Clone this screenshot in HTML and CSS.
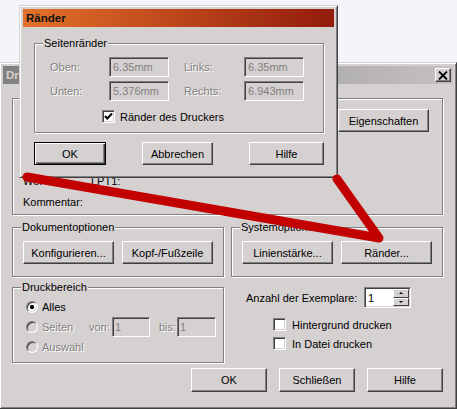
FILE: index.html
```html
<!DOCTYPE html>
<html lang="de">
<head>
  <meta charset="UTF-8" />
  <meta name="viewport" content="width=device-width, initial-scale=1.0" />
  <title>Drucken - Ränder</title>
  <link rel="stylesheet" href="styles.css">
</head>
<body>
  <div class="desk">

    <!-- main print dialog (inactive) -->
    <div class="win print">
      <div class="titlebar inactive">
        <span>Drucken</span>
        <span class="close">
          <svg width="10" height="9" viewBox="0 0 10 9"><path d="M1 0.5 L9 8.5 M9 0.5 L1 8.5" stroke="#000" stroke-width="1.8" fill="none"/></svg>
        </span>
      </div>
      <div class="print-body">
        <div class="group printer">
          <!-- name / status / type rows sit behind the Ränder dialog -->
          <div class="printer-grid">
            <span></span>
            <div class="field select"></div>
            <button class="btn">Eigenschaften</button>
            <span></span><span></span><span></span>
            <span></span><span></span><span></span>
            <span>Wo:</span>
            <span>LPT1:</span>
            <span></span>
            <span>Kommentar:</span>
            <span></span>
            <span></span>
          </div>
        </div>

        <div class="pair opts">
          <div class="group btn-group">
            <span class="legend">Dokumentoptionen</span>
            <button class="btn">Konfigurieren...</button>
            <button class="btn">Kopf-/Fußzeile</button>
          </div>
          <div class="group btn-group">
            <span class="legend">Systemoptionen</span>
            <button class="btn">Linienstärke...</button>
            <button class="btn">Ränder...</button>
          </div>
        </div>

        <div class="pair lower">
          <div class="group range">
            <span class="legend">Druckbereich</span>
            <div class="range-row">
              <span class="radio on"></span>
              <span class="rlabel">Alles</span>
            </div>
            <div class="range-row">
              <span class="rcell">
                <span class="radio off"></span>
                <span class="rlabel muted">Seiten</span>
              </span>
              <span class="muted from">von:</span>
              <span class="field off small">1</span>
              <span class="muted to">bis:</span>
              <span class="field off small wide">1</span>
            </div>
            <div class="range-row">
              <span class="radio off"></span>
              <span class="rlabel muted">Auswahl</span>
            </div>
          </div>

          <div class="copies">
            <div class="copies-row">
              <span class="copies-label">Anzahl der Exemplare:</span>
              <div class="field spin">
                <span class="spin-val">1</span>
                <span class="spin-btns">
                  <span class="spin-btn"><i class="tri up"></i></span>
                  <span class="spin-btn"><i class="tri down"></i></span>
                </span>
              </div>
            </div>
            <div class="check-row">
              <span class="check"></span>
              <span>Hintergrund drucken</span>
            </div>
            <div class="check-row">
              <span class="check"></span>
              <span>In Datei drucken</span>
            </div>
          </div>
        </div>

        <div class="actions">
          <button class="btn">OK</button>
          <button class="btn">Schließen</button>
          <button class="btn">Hilfe</button>
        </div>
      </div>
    </div>

    <!-- margins dialog (active, on top) -->
    <div class="win margins">
      <div class="titlebar active">
        <span>Ränder</span>
      </div>
      <div class="margins-body">
        <div class="group sides">
          <span class="legend">Seitenränder</span>
          <div class="sides-grid">
            <span class="muted">Oben:</span>
            <span class="field off">6.35mm</span>
            <span class="muted gap-left">Links:</span>
            <span class="field off">6.35mm</span>
            <span class="muted">Unten:</span>
            <span class="field off">5.376mm</span>
            <span class="muted gap-left">Rechts:</span>
            <span class="field off">6.943mm</span>
          </div>
          <div class="printer-margins">
            <span class="check">
              <svg width="9" height="9" viewBox="0 0 9 9"><path d="M1 4 L3.3 6.5 L8 1.5" stroke="#000" stroke-width="2" fill="none"/></svg>
            </span>
            <span>Ränder des Druckers</span>
          </div>
        </div>
        <div class="margins-actions">
          <button class="btn default w72">OK</button>
          <button class="btn w71">Abbrechen</button>
          <button class="btn w75">Hilfe</button>
        </div>
      </div>
    </div>

    <!-- red pointer drawn over both dialogs -->
    <svg class="pointer" width="457" height="409" viewBox="0 0 457 409">
      <defs>
        <filter id="soft"><feGaussianBlur stdDeviation="0.6"/></filter>
      </defs>
      <path d="M27 177 L379 238 L337 179" stroke="#c20000" stroke-width="9" stroke-linecap="round" stroke-linejoin="round" fill="none" filter="url(#soft)"/>
    </svg>
  </div>
</body>
</html>
```

FILE: styles.css
```css
* {
  box-sizing: border-box;
}

body {
  margin: 0;
  font-family: "Liberation Sans", Arial, sans-serif;
  font-size: 11px;
  color: #000;
  background: #f3f5fa;
}

.desk {
  position: relative;
  width: 457px;
  height: 409px;
  overflow: hidden;
}

/* window frame */
.win {
  position: absolute;
  display: flex;
  flex-direction: column;
  padding: 3px;
  background: #d6d1d1;
  border: 1px solid;
  border-color: #d6d1d1 #404040 #404040 #d6d1d1;
  box-shadow: inset 1px 1px 0 #fff, inset -1px -1px 0 #808080;
}

.win.print {
  left: -1px;
  top: 62px;
  width: 458px;
  height: 347px;
}

.win.margins {
  left: 19px;
  top: 5px;
  width: 319px;
  height: 173px;
}

.titlebar {
  height: 18px;
  flex-shrink: 0;
  display: flex;
  align-items: center;
  justify-content: space-between;
  padding: 0 2px 0 3px;
  font-weight: bold;
  font-size: 11.5px;
}

.titlebar.inactive {
  background: linear-gradient(90deg, #808080, #c4c0c4);
  color: #d4d0c8;
}

.titlebar.active {
  background: linear-gradient(90deg, #e2722a, #931b0c);
  color: #111;
}

.close {
  width: 16px;
  height: 14px;
  display: flex;
  align-items: center;
  justify-content: center;
  background: #d6d1d1;
  border: 1px solid;
  border-color: #fff #404040 #404040 #fff;
  box-shadow: inset -1px -1px 0 #808080;
}

/* controls */
.btn {
  font: inherit;
  color: #000;
  padding: 0;
  height: 23px;
  background: #d6d1d1;
  border: 1px solid;
  border-color: #fff #404040 #404040 #fff;
  box-shadow: inset -1px -1px 0 #808080;
}

.btn.default {
  border-color: #000;
  box-shadow: inset 1px 1px 0 #fff, inset -1px -1px 0 #404040, inset -2px -2px 0 #808080;
}

.field {
  display: flex;
  align-items: center;
  height: 20px;
  padding: 0 3px;
  background: #fff;
  border: 1px solid;
  border-color: #808080 #fff #fff #808080;
  box-shadow: inset 1px 1px 0 #404040, inset -1px -1px 0 #d6d1d1;
  white-space: nowrap;
  overflow: hidden;
}

.field.off {
  background: #d6d1d1;
  color: #808080;
}

.muted {
  color: #808080;
  text-shadow: 1px 1px 0 #fff;
}

.group {
  position: relative;
  border: 1px solid #808080;
  box-shadow: inset 1px 1px 0 #fff, 1px 1px 0 #fff;
}

.legend {
  position: absolute;
  top: -7px;
  left: 8px;
  padding: 0 1px;
  line-height: 13px;
  background: #d6d1d1;
}

.check {
  width: 13px;
  height: 13px;
  flex-shrink: 0;
  display: flex;
  align-items: center;
  justify-content: center;
  background: #fff;
  border: 1px solid;
  border-color: #808080 #fff #fff #808080;
  box-shadow: inset 1px 1px 0 #404040, inset -1px -1px 0 #d6d1d1;
}

.radio {
  width: 12px;
  height: 12px;
  flex-shrink: 0;
  border-radius: 50%;
  border: 1px solid;
  border-color: #808080 #fff #fff #808080;
  box-shadow: inset 1px 1px 0 #404040, inset -1px -1px 0 #d6d1d1;
}

.radio.on {
  background: radial-gradient(circle, #000 0, #000 1.8px, #fff 2.4px);
}

.radio.off {
  background: #d6d1d1;
}

/* print dialog body */
.print-body {
  display: flex;
  flex-direction: column;
  padding: 14px 10px 0 9px;
}

.printer {
  height: 117px;
  padding: 10px 13px 0 10px;
}

.printer-grid {
  display: grid;
  grid-template-columns: 68px 1fr 91px;
  grid-template-rows: 23px 19px 19px 21px 21px;
  align-items: center;
}

.printer-grid .select {
  height: 21px;
  margin-right: 8px;
}

.pair {
  display: grid;
  grid-template-columns: 212px 212px;
  column-gap: 7px;
}

.opts {
  margin-top: 12px;
  height: 50px;
}

.btn-group {
  display: flex;
  gap: 8px;
  padding: 13px 10px 0;
}

.btn-group .btn {
  flex: 1;
}

.lower {
  margin-top: 10px;
  height: 76px;
}

.range {
  padding: 9px 0 0 13px;
}

.range-row {
  display: flex;
  align-items: center;
  height: 20px;
}

.rlabel {
  margin-left: 4px;
}

.rcell {
  display: flex;
  align-items: center;
  width: 63px;
}

.from {
  width: 23px;
}

.to {
  width: 18px;
  margin-left: 9px;
}

.field.small {
  width: 38px;
  padding: 0 2px;
}

.field.small.wide {
  width: 39px;
}

.copies-row {
  display: flex;
  align-items: center;
  height: 21px;
  padding-left: 15px;
}

.copies-label {
  width: 118px;
}

.field.spin {
  width: 47px;
  height: 21px;
  padding: 0 1px 0 3px;
  justify-content: space-between;
}

.spin-btns {
  display: flex;
  flex-direction: column;
  width: 16px;
  height: 17px;
}

.spin-btn {
  flex: 1;
  display: flex;
  align-items: center;
  justify-content: center;
  background: #d6d1d1;
  border: 1px solid;
  border-color: #fff #404040 #404040 #fff;
}

.tri {
  width: 0;
  height: 0;
  border-left: 2px solid transparent;
  border-right: 2px solid transparent;
}

.tri.up {
  border-bottom: 2px solid #000;
}

.tri.down {
  border-top: 2px solid #000;
}

.copies {
  display: flex;
  flex-direction: column;
}

.check-row {
  display: flex;
  align-items: center;
  gap: 6px;
  height: 19px;
  padding-left: 42px;
}

.copies-row + .check-row {
  margin-top: 7px;
}

.actions {
  display: flex;
  justify-content: flex-end;
  gap: 12px;
  margin-top: 5px;
}

.actions .btn {
  width: 76px;
  height: 24px;
}

/* margins dialog body */
.margins-body {
  display: flex;
  flex-direction: column;
  padding: 16px 10px 0 11px;
}

.sides {
  height: 90px;
  padding: 13px 0 0 15px;
}

.sides-grid {
  display: grid;
  grid-template-columns: 59px 60px 75px 60px;
  grid-template-rows: 20px 20px;
  row-gap: 4px;
  align-items: center;
}

.gap-left {
  padding-left: 15px;
}

.printer-margins {
  display: flex;
  align-items: center;
  gap: 5px;
  margin-top: 9px;
  padding-left: 52px;
}

.margins-actions {
  display: flex;
  justify-content: space-between;
  margin-top: 9px;
}

.w72 { width: 72px; }
.w71 { width: 71px; }
.w75 { width: 75px; }

.pointer {
  position: absolute;
  left: 0;
  top: 0;
  pointer-events: none;
}
```
